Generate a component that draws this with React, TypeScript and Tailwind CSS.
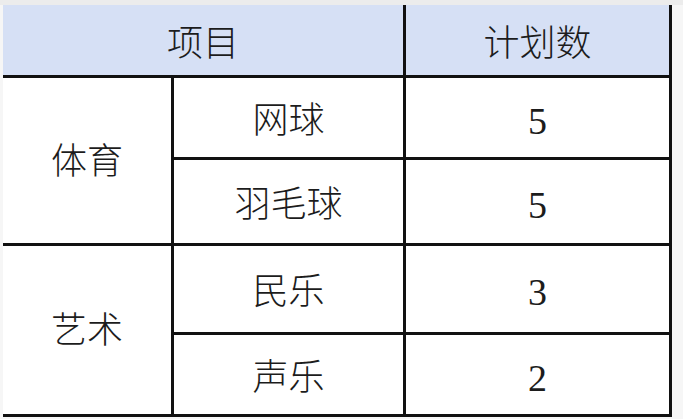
import React from "react";

interface Row {
  group: string;
  item: string;
  plan: number;
}

const rows: Row[] = [
  { group: "体育", item: "网球", plan: 5 },
  { group: "体育", item: "羽毛球", plan: 5 },
  { group: "艺术", item: "民乐", plan: 3 },
  { group: "艺术", item: "声乐", plan: 2 },
];

const font = { fontFamily: '"Liberation Serif", "Noto Sans CJK SC", serif' };

const App: React.FC = () => {
  return (
    <div className="w-[683px] h-[419px] bg-[#f6f6f6] overflow-hidden" style={font}>
      <div className="h-[5px] bg-[#ececec]" />
      <div className="pl-[3px]">
        <div className="grid w-[669px] grid-cols-[168px_229px_263px] grid-rows-[70px_79px_83px_86px_79px] gap-[3px] pr-[3px] pb-[3px] bg-[#111] text-[36px] font-light text-[#1c1c1c] leading-none">
          <div className="col-span-2 bg-[#d6e0f5] flex items-center justify-center pt-[8px]">项目</div>
          <div className="bg-[#d6e0f5] flex items-center justify-center pt-[8px]">计划数</div>

          <div className="row-span-2 bg-white flex items-center justify-center pt-[2px]">{rows[0].group}</div>
          <div className="bg-white flex items-center justify-center pt-[6px]">{rows[0].item}</div>
          <div className="bg-white flex items-center justify-center pt-[6px] text-[38px]">{rows[0].plan}</div>
          <div className="bg-white flex items-center justify-center pt-[6px]">{rows[1].item}</div>
          <div className="bg-white flex items-center justify-center pt-[6px] text-[38px]">{rows[1].plan}</div>

          <div className="row-span-2 bg-white flex items-center justify-center pt-[2px]">{rows[2].group}</div>
          <div className="bg-white flex items-center justify-center pt-[6px]">{rows[2].item}</div>
          <div className="bg-white flex items-center justify-center pt-[6px] text-[38px]">{rows[2].plan}</div>
          <div className="bg-white flex items-center justify-center pt-[6px]">{rows[3].item}</div>
          <div className="bg-white flex items-center justify-center pt-[6px] text-[38px]">{rows[3].plan}</div>
        </div>
      </div>
    </div>
  );
};

export default App;
